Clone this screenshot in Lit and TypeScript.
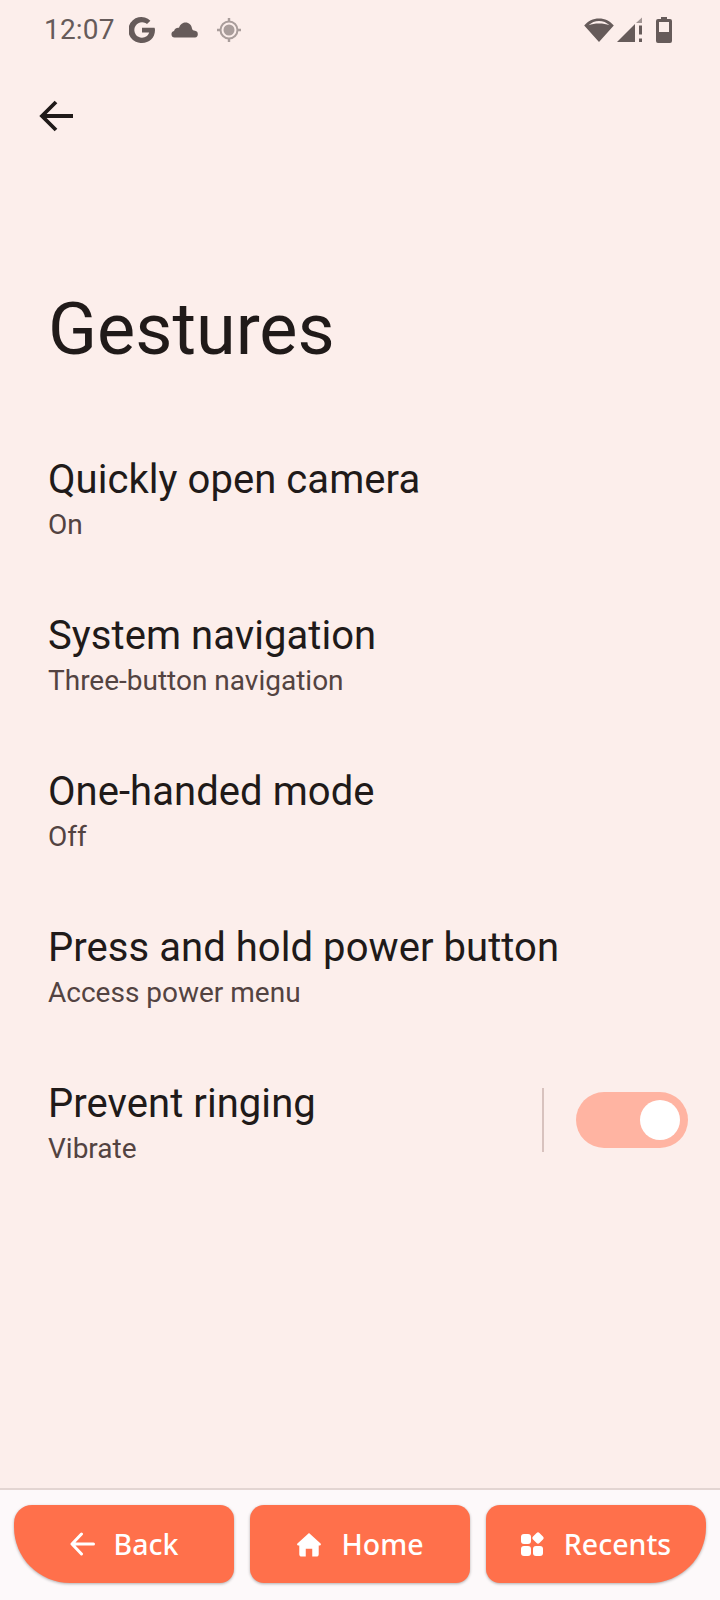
import { LitElement, html, css } from "lit";
import { customElement } from "lit/decorators.js";

const rows = [
  ["Quickly open camera", "On"],
  ["System navigation", "Three-button navigation"],
  ["One-handed mode", "Off"],
  ["Press and hold power button", "Access power menu"],
  ["Prevent ringing", "Vibrate"],
];

@customElement("app-root")
export class AppRoot extends LitElement {
  static styles = css`
    :host { display: block; width: 720px; height: 1600px; overflow: hidden; background: #fceeeb; font-family: Roboto, sans-serif; color: #201a19; }
    .page { display: flex; flex-direction: column; height: 1600px; }
    .status { height: 60px; display: flex; align-items: center; padding: 0 48px 0 44px; color: #665b5a; flex: none; }
    .time { font-size: 28px; line-height: 60px; margin-right: 14px; letter-spacing: 0.2px; }
    .status svg { display: block; flex: none; }
    .cloud { margin-left: 16px; }
    .loc { margin-left: 18px; }
    .spacer { flex: 1; }
    .bar { height: 112px; display: flex; align-items: center; padding-left: 38px; flex: none; box-sizing: border-box; }
    .title { margin: 118px 0 0; padding: 0 48px; font-size: 72px; font-weight: 400; line-height: 80px; height: 80px; flex: none; }
    .list { margin-top: 53px; flex: 1; }
    .row { height: 156px; box-sizing: border-box; padding-left: 48px; display: flex; align-items: center; }
    .text { flex: 1; padding-top: 2px; }
    .t { font-size: 40px; line-height: 46px; letter-spacing: 0.06px; }
    .s { font-size: 28px; line-height: 44px; color: #534341; }
    .div { width: 2px; height: 64px; background: #d8c2be; margin: 0 32px 10px 0; }
    .toggle { width: 112px; height: 56px; border-radius: 28px; background: #ffb4a2; margin: 0 32px 10px 0; display: flex; align-items: center; justify-content: flex-end; padding-right: 8px; box-sizing: border-box; }
    .thumb { width: 40px; height: 40px; border-radius: 50%; background: #fff; }
    .nav { height: 112px; flex: none; box-sizing: border-box; border-top: 2px solid #e3d5d2; background: #fdf9fa; display: flex; gap: 16px; padding: 15px 14px 0; }
    .btn { flex: 1; height: 78px; background: #ff704b; color: #fff; border-radius: 14px; display: flex; align-items: center; justify-content: center; gap: 19px; font-family: "Noto Sans", sans-serif; font-size: 28.5px; font-weight: 500; box-shadow: 0 1px 3px rgba(0,0,0,.3); }
    .btn.first { border-radius: 18px 14px 14px 56px; }
    .btn.last { border-radius: 14px 18px 56px 14px; }
  `;

  render() {
    return html`<div class="page">
      <div class="status">
        <span class="time">12:07</span>
        <svg width="26" height="26" viewBox="0 0 26 26"><path d="M25.500 10.800H13v4.700h7.200c-.9 3-3.600 5.200-7.200 5.200a7.700 7.700 0 1 1 5-13.600l3.400-3.400A13 13 0 1 0 13 26c7 0 13-5 13-13 0-.8-.2-1.500-.5-2.200z" fill="currentColor"/></svg>
        <svg class="cloud" width="28" height="16" viewBox="0 0 28 16"><path d="M3.500 15.500a3.300 3.300 0 0 1-.5-6.500C3.800 6.300 6.300 5.300 8 5.800 9.300 2 12 .5 14.500.5c3.500 0 6 2.500 6.500 6 .3 1.600 1.500 2 3 2.300a3.400 3.400 0 0 1 0 6.700z" fill="currentColor"/></svg>
        <svg class="loc" width="24" height="24" viewBox="0 0 24 24" opacity=".55"><circle cx="12" cy="12" r="5.500" fill="currentColor"/><circle cx="12" cy="12" r="8.500" fill="none" stroke="currentColor" stroke-width="2"/><path d="M12 0v4M12 20v4M0 12h4M20 12h4" stroke="currentColor" stroke-width="2.400"/></svg>
        <div class="spacer"></div>
        <svg width="30" height="26" viewBox="0 0 30 26"><path fill-rule="evenodd" d="M15 25 .2 8.600C4 4 9 1.500 15 1.500S26 4 29.800 8.600zM4.500 8.200C7.500 7.200 11 6.500 15 6.500s7.500.7 10.500 1.700C22.500 5.500 19 4 15 4S7.500 5.500 4.500 8.200z" fill="currentColor"/></svg>
        <svg style="margin-left:3px" width="26" height="26" viewBox="0 0 26 26"><path d="M0 25 18 7v18z" fill="currentColor"/><path d="M19 6 25 .5V6z" fill="currentColor" opacity=".6"/><path d="M22 8.500h3v9h-3zM22 21.500h3V25h-3z" fill="currentColor"/></svg>
        <svg style="margin-left:13px" width="16" height="26" viewBox="0 0 16 26"><path d="M5 0h6v2h3a2 2 0 0 1 2 2v20a2 2 0 0 1-2 2H2a2 2 0 0 1-2-2V4a2 2 0 0 1 2-2h3z" fill="currentColor"/><rect x="3" y="5" width="10" height="10" fill="#fceeeb"/></svg>
      </div>
      <div class="bar">
        <svg width="36" height="36" viewBox="0 0 36 36"><path d="M35 18H6M18 4 4 18 18 32" fill="none" stroke="#201a19" stroke-width="3.800"/></svg>
      </div>
      <h1 class="title">Gestures</h1>
      <div class="list">
        ${rows.map(([t, s], i) => html`<div class="row">
          <div class="text"><div class="t">${t}</div><div class="s">${s}</div></div>
          ${i === 4 ? html`<div class="div"></div><div class="toggle"><div class="thumb"></div></div>` : ""}
        </div>`)}
      </div>
      <div class="nav">
        <div class="btn first"><svg width="25" height="24" viewBox="0 0 25 24"><path d="M23.500 12H3M11.500 2 2 12l9.500 10" fill="none" stroke="#fff" stroke-width="3" stroke-linecap="round" stroke-linejoin="round"/></svg>Back</div>
        <div class="btn"><svg width="26" height="25" viewBox="0 0 28 27"><path d="M14 1 1.500 12.500c-.8.8-.3 2 .8 2H3.500v9.500c0 1.500 1 2.500 2.500 2.500h4.500V18h7v8.500H22c1.500 0 2.500-1 2.500-2.500v-9.500h1.200c1.100 0 1.600-1.200.8-2z" fill="#fff"/></svg>Home</div>
        <div class="btn last"><svg width="24" height="24" viewBox="0 0 24 24"><rect x="0" y="2" width="10" height="10" rx="3" fill="#fff"/><rect x="0" y="14" width="10" height="10" rx="3" fill="#fff"/><rect x="12" y="14" width="10" height="10" rx="3" fill="#fff"/><rect x="12.500" y="1.500" width="9" height="9" rx="2" transform="rotate(45 17 6)" fill="#fff"/></svg>Recents</div>
      </div>
    </div>`;
  }
}
